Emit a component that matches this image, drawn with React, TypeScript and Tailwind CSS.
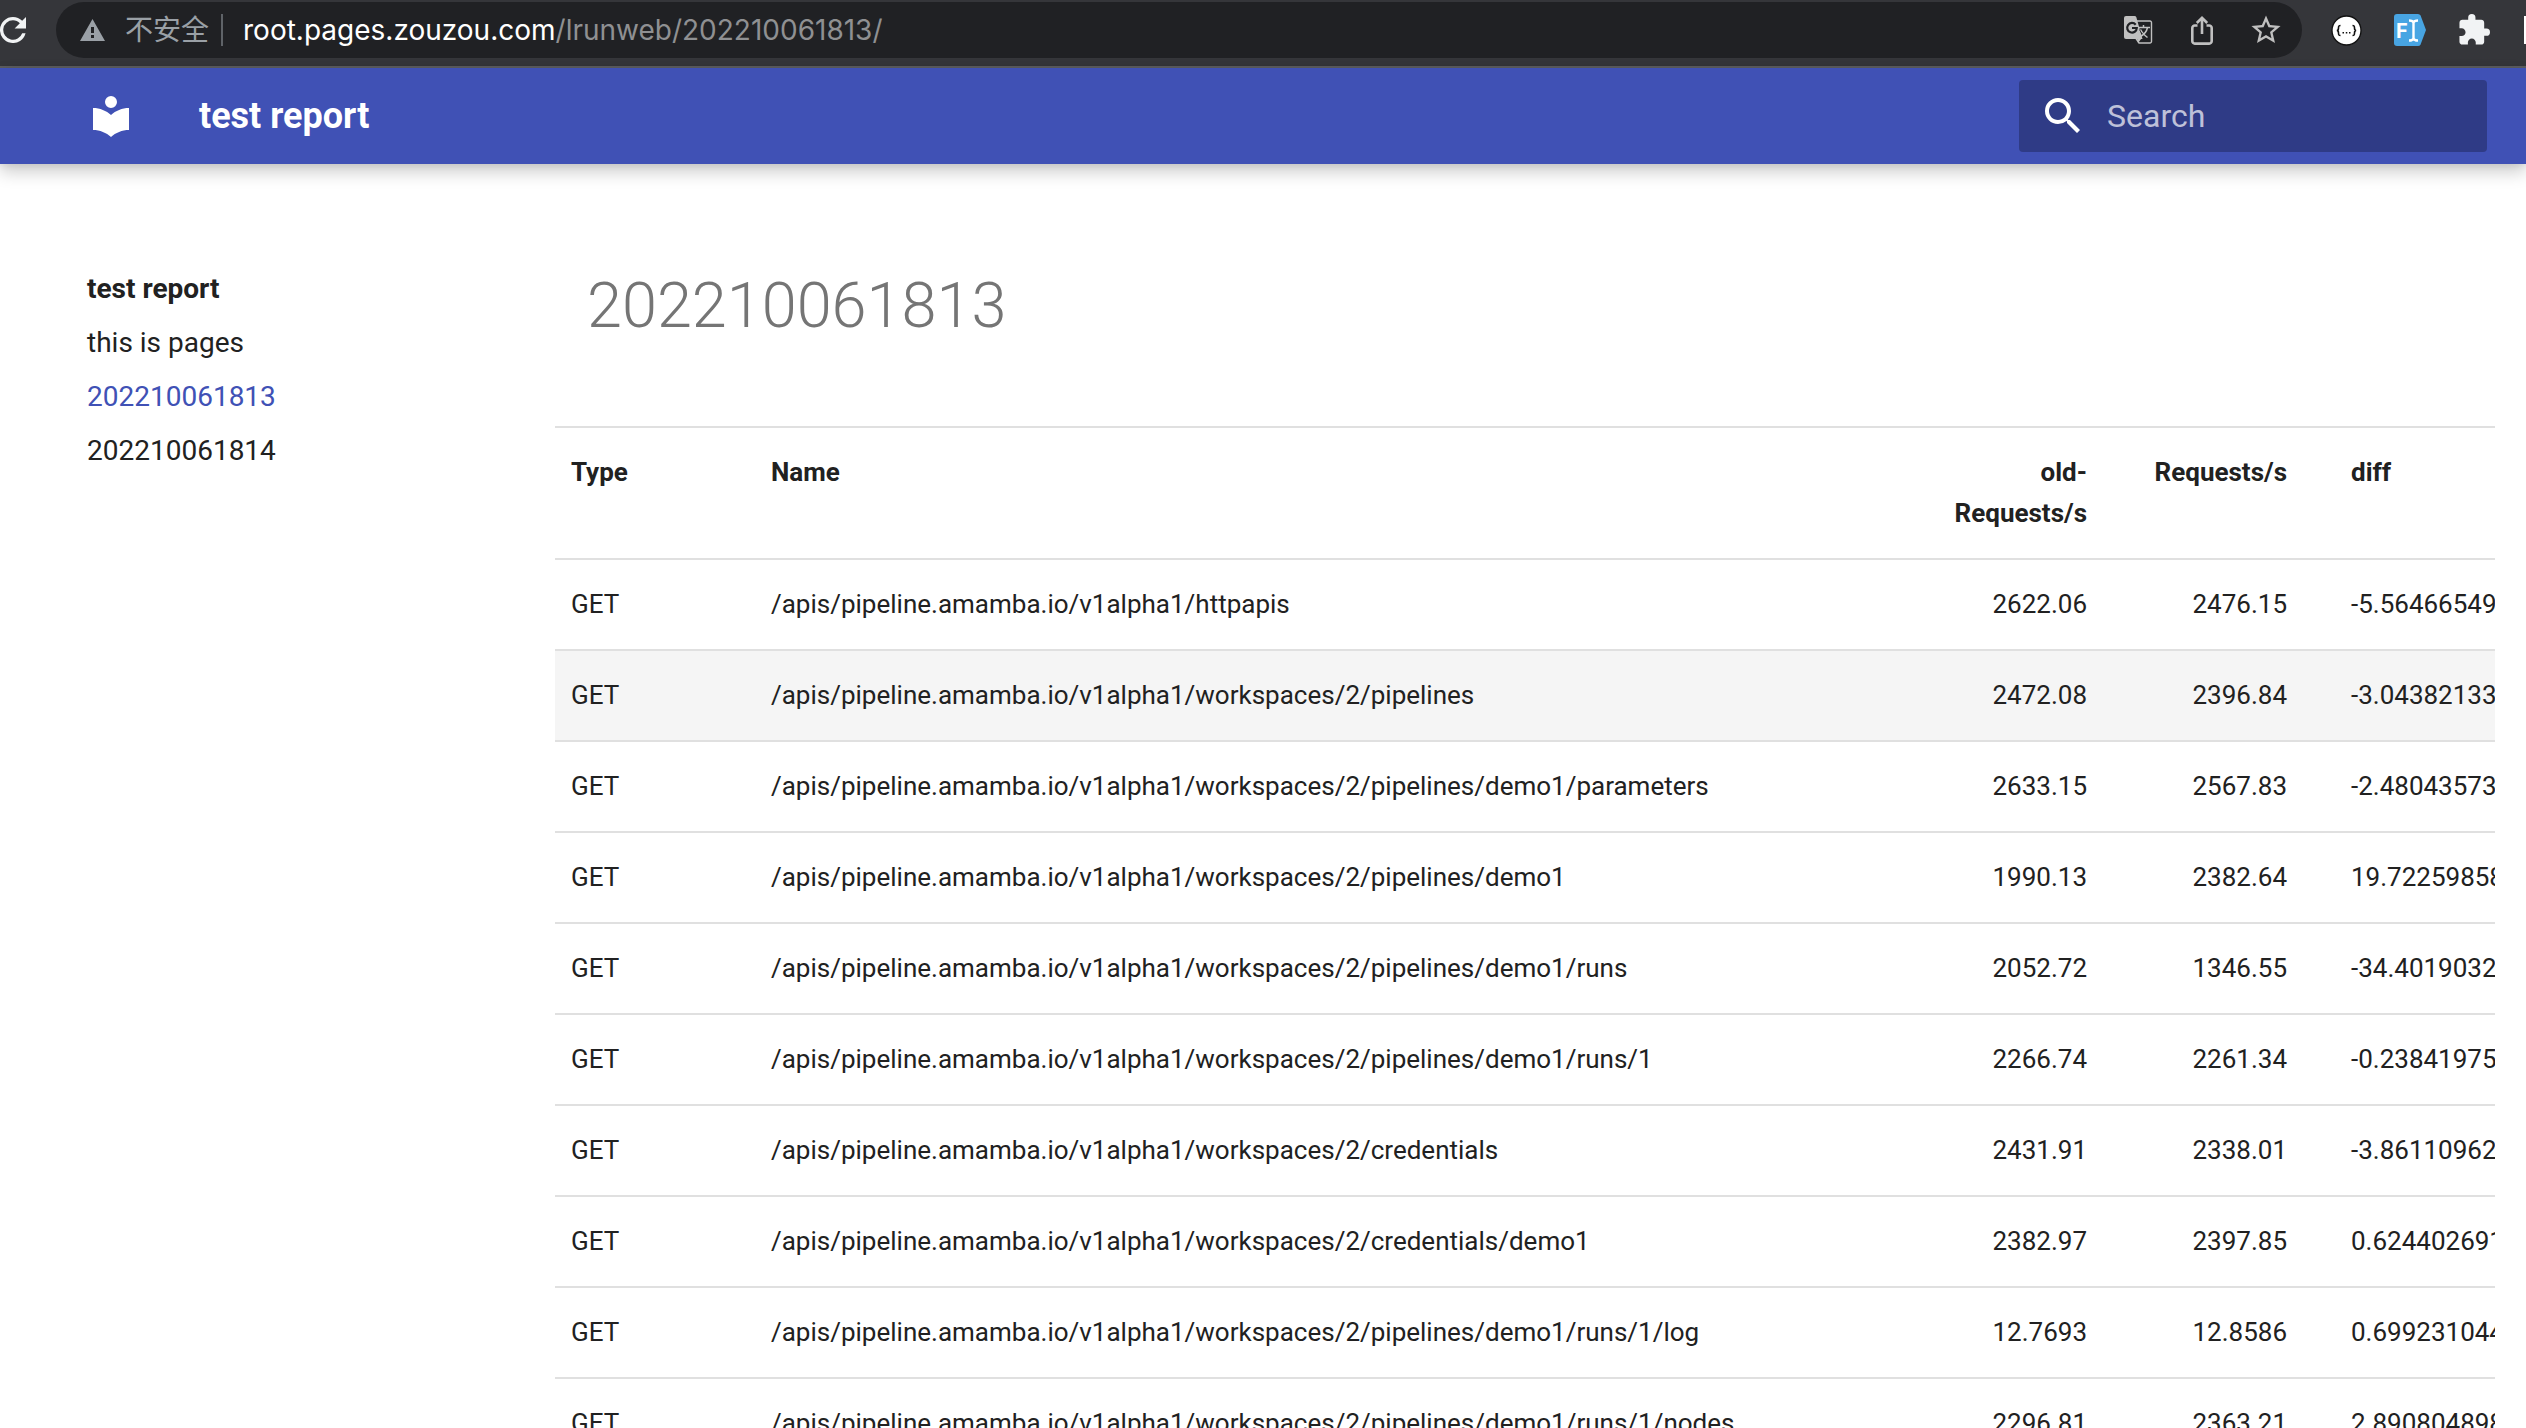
import { useState } from "react"

const rows = [
  ["GET", "/apis/pipeline.amamba.io/v1alpha1/httpapis", "2622.06", "2476.15", "-5.56466549"],
  ["GET", "/apis/pipeline.amamba.io/v1alpha1/workspaces/2/pipelines", "2472.08", "2396.84", "-3.04382133"],
  ["GET", "/apis/pipeline.amamba.io/v1alpha1/workspaces/2/pipelines/demo1/parameters", "2633.15", "2567.83", "-2.48043573"],
  ["GET", "/apis/pipeline.amamba.io/v1alpha1/workspaces/2/pipelines/demo1", "1990.13", "2382.64", "19.72259858"],
  ["GET", "/apis/pipeline.amamba.io/v1alpha1/workspaces/2/pipelines/demo1/runs", "2052.72", "1346.55", "-34.4019032"],
  ["GET", "/apis/pipeline.amamba.io/v1alpha1/workspaces/2/pipelines/demo1/runs/1", "2266.74", "2261.34", "-0.23841975"],
  ["GET", "/apis/pipeline.amamba.io/v1alpha1/workspaces/2/credentials", "2431.91", "2338.01", "-3.86110962"],
  ["GET", "/apis/pipeline.amamba.io/v1alpha1/workspaces/2/credentials/demo1", "2382.97", "2397.85", "0.624402691"],
  ["GET", "/apis/pipeline.amamba.io/v1alpha1/workspaces/2/pipelines/demo1/runs/1/log", "12.7693", "12.8586", "0.699231044"],
  ["GET", "/apis/pipeline.amamba.io/v1alpha1/workspaces/2/pipelines/demo1/runs/1/nodes", "2296.81", "2363.21", "2.890804898"],
]

const navItems = ["this is pages", "202210061813", "202210061814"]

function BrowserBar() {
  return (
    <div className="flex h-[68px] items-start overflow-hidden border-b-2 border-[#5e5f61] bg-[#35363a] pt-[2px] font-['Inter','Noto_Sans_CJK_SC',sans-serif]">
      <button aria-label="Reload" className="mt-[15px] mr-[30px] shrink-0">
        <svg viewBox="4 4 16 16" className="h-[26px] w-[26px] fill-[#f1f3f4]">
          <path d="M17.65 6.35A7.958 7.958 0 0 0 12 4a8 8 0 1 0 7.73 10h-2.08A6 6 0 1 1 12 6c1.66 0 3.14.69 4.22 1.78L13 11h7V4l-2.35 2.35z" />
        </svg>
      </button>

      {/* Address field */}
      <div className="flex h-14 min-w-0 flex-1 items-center rounded-full bg-[#202124] pr-5 pl-6">
        <svg viewBox="0 0 25 22" className="h-[22px] w-[25px] fill-[#9aa0a6]">
          <path fillRule="evenodd" d="M12.5 0 25 22H0zM11 8v6h3V8zm0 8v3h3v-3z" />
        </svg>
        <span className="ml-5 text-[28px] text-[#9aa0a6]">不安全</span>
        <span className="ml-3 h-8 w-[2px] bg-[#5f6368]" />
        <span className="ml-5 flex-1 text-[28px] text-[#8f9092]">
          <span className="text-white">root.pages.zouzou.com</span>/lrunweb/202210061813/
        </span>
        <div className="flex items-center gap-8">
          <button aria-label="Translate">
            <svg viewBox="0 0 32 32" className="h-8 w-8">
              <path d="M14 7h14a1.5 1.5 0 0 1 1.500 1.500v19A1.500 1.500 0 0 1 28 29H17l-4-6" fill="none" stroke="#c0c0c0" strokeWidth="1.400" />
              <path d="M19.500 24.500 16 29l-1-5z" fill="#c0c0c0" />
              <path d="M4 2h8.500a2 2 0 0 1 1.900 1.400L20.500 25H4a2 2 0 0 1-2-2V4a2 2 0 0 1 2-2z" fill="#c0c0c0" />
              <path d="M15.800 13.500H28M21.500 11v2.500M25.500 13.500c-.8 4-4 7.500-7.500 9M18.500 15.500c1.500 3.500 4.500 6 7 8" fill="none" stroke="#c0c0c0" strokeWidth="1.500" />
              <path d="M17.400 15.500c1 2 2 3.500 3 4.500" fill="none" stroke="#202124" strokeWidth="0.800" />
              <path d="M13.700 10.700A4.800 4.800 0 1 0 14.800 14H10" fill="none" stroke="#202124" strokeWidth="2.200" />
            </svg>
          </button>
          <button aria-label="Share">
            <svg viewBox="0 0 32 32" className="h-8 w-8" fill="none" stroke="#c0c0c0" strokeWidth="2.600">
              <path d="M11.500 11.500H9A2.500 2.500 0 0 0 6.300 14v13A2.500 2.500 0 0 0 9 29.600h14a2.500 2.500 0 0 0 2.700-2.600V14a2.500 2.500 0 0 0-2.700-2.500h-2.500M16 20V4M10.800 9 16 3.800 21.200 9" />
            </svg>
          </button>
          <button aria-label="Bookmark">
            <svg viewBox="1 1 22 22" className="h-8 w-8 fill-[#c0c0c0]">
              <path d="m22 9.240-7.190-.62L12 2 9.190 8.630 2 9.240l5.460 4.730L5.820 21 12 17.270 18.180 21l-1.630-7.030L22 9.240zM12 15.400l-3.760 2.270 1-4.280-3.320-2.880 4.380-.38L12 6.100l1.710 4.040 4.380.38-3.320 2.880 1 4.280L12 15.400z" />
            </svg>
          </button>
        </div>
      </div>

      {/* Extensions */}
      <div className="ml-7 flex h-14 shrink-0 items-center gap-8">
        <button aria-label="JSON viewer">
          <svg viewBox="0 0 32 32" className="h-8 w-8">
            <circle cx="16.500" cy="16.500" r="14.500" fill="#fff" stroke="#111" strokeWidth="1.300" />
            <g fill="none" stroke="#111" strokeWidth="1.600">
              <path d="M10.500 11.500c-2 0-2 .8-2 2.500 0 1.600 0 2.500-1.700 2.500 1.700 0 1.700.9 1.700 2.500 0 1.700 0 2.500 2 2.500M22.500 11.500c2 0 2 .8 2 2.500 0 1.600 0 2.500 1.700 2.500-1.700 0-1.700.9-1.700 2.500 0 1.700 0 2.500-2 2.500" />
            </g>
            <path d="M12.500 18h1.500v1.500h-1.500zM15.800 18h1.500v1.500h-1.500zM19 18h1.500v1.500H19z" fill="#111" />
          </svg>
        </button>
        <button aria-label="Form filler">
          <svg viewBox="0 0 32 32" className="h-8 w-8">
            <path d="M3 0h21a3 3 0 0 1 2.600 1.600L32 16l-5.400 14.400A3 3 0 0 1 24 32H3a3 3 0 0 1-3-3V3a3 3 0 0 1 3-3z" fill="#48a5e3" />
            <text x="2" y="23.500" fontSize="20" fontWeight="700" fill="#fff">F</text>
            <path d="M15 6.500c2.500 0 4 .5 4.500 2 .5-1.500 2-2 4.500-2M19.500 8v17M15 26.500c2.500 0 4-.5 4.500-2 .5 1.500 2 2 4.500 2" fill="none" stroke="#fff" strokeWidth="2.400" />
          </svg>
        </button>
        <button aria-label="Extensions">
          <svg viewBox="1 1 22 22" className="h-8 w-8 fill-[#f1f3f4]">
            <path d="M20.500 11H19V7c0-1.100-.9-2-2-2h-4V3.500a2.500 2.500 0 0 0-5 0V5H4c-1.100 0-1.990.9-1.990 2v3.800H3.500c1.490 0 2.700 1.210 2.700 2.700s-1.210 2.700-2.700 2.700H2V20c0 1.100.9 2 2 2h3.800v-1.500c0-1.490 1.210-2.700 2.700-2.700 1.490 0 2.700 1.210 2.700 2.700V22H17c1.100 0 2-.9 2-2v-4h1.500a2.500 2.500 0 0 0 0-5z" />
          </svg>
        </button>
        <span className="h-7 w-1 border-r-2 border-white" />
      </div>
    </div>
  )
}

export default function App() {
  const [query, setQuery] = useState("")

  return (
    <div className="h-screen overflow-hidden bg-white font-['Roboto',sans-serif] text-[#212121]">
      <BrowserBar />
      <header className="relative flex h-24 items-center bg-[#4051b5] pr-[39px] pl-[87px] text-white shadow-[0_0_8px_#0000001a,0_8px_16px_#00000033]">
        <a href="#" aria-label="test report">
          <svg viewBox="0 0 24 24" className="h-12 w-12 fill-white">
            <path d="M12 8a3 3 0 0 0 3-3 3 3 0 0 0-3-3 3 3 0 0 0-3 3 3 3 0 0 0 3 3m0 3.540C9.640 9.350 6.500 8 3 8v11c3.500 0 6.640 1.350 9 3.540 2.360-2.190 5.500-3.540 9-3.540V8c-3.500 0-6.640 1.350-9 3.540z" />
          </svg>
        </a>
        <span className="ml-16 flex-1 text-4xl font-bold">test report</span>
        <label className="flex h-[72px] w-[468px] items-center rounded bg-[#2f3b86] pl-5">
          <svg viewBox="0 0 24 24" className="h-12 w-12 shrink-0 fill-white">
            <path d="M9.500 3A6.500 6.500 0 0 1 16 9.500c0 1.610-.59 3.090-1.560 4.230l.27.27h.79l5 5-1.500 1.500-5-5v-.79l-.27-.27A6.516 6.516 0 0 1 9.500 16 6.500 6.500 0 0 1 3 9.500 6.500 6.500 0 0 1 9.500 3m0 2C7 5 5 7 5 9.500S7 14 9.500 14 14 12 14 9.500 12 5 9.500 5z" />
          </svg>
          <input
            type="text"
            aria-label="Search"
            placeholder="Search"
            value={query}
            onChange={(e) => setQuery(e.target.value)}
            className="ml-5 w-full min-w-0 bg-transparent text-[32px] outline-none placeholder:text-white/70"
          />
        </label>
      </header>

      <div className="flex pr-[31px]">
        <nav className="w-[555px] shrink-0 pt-[98px] pl-[87px] text-[28px] leading-[54px]">
          <a href="#" className="font-bold">test report</a>
          <ul>
            {navItems.map((item) => (
              <li key={item}>
                <a href={`#${item}`} className={item === "202210061813" ? "text-[#4051b5]" : ""}>{item}</a>
              </li>
            ))}
          </ul>
        </nav>

        <main className="min-w-0 flex-1 pt-[98px]">
          <h1 className="mb-[77px] pl-8 text-[63px] leading-[87px] font-light text-[#757575]">202210061813</h1>
          <table className="w-full table-fixed text-[26px] leading-[41px]">
            <thead>
              <tr className="border-y-2 border-[#e0e0e0] text-left align-top">
                <th className="w-[184px] py-6 pr-8 pl-4">Type</th>
                <th className="px-8 py-6">Name</th>
                <th className="w-[200px] px-8 py-6 text-right">old-Requests/s</th>
                <th className="w-[200px] px-8 py-6 text-right">Requests/s</th>
                <th className="w-[176px] py-6 pl-8">diff</th>
              </tr>
            </thead>
            <tbody>
              {rows.map(([type, name, oldRps, rps, diff], i) => (
                <tr key={name} className={i === 1 ? "border-b-2 border-[#e0e0e0] bg-[#f5f5f5]" : "border-b-2 border-[#e0e0e0]"}>
                  <td className="py-6 pr-8 pl-4">{type}</td>
                  <td className="px-8 py-6">{name}</td>
                  <td className="px-8 py-6 text-right">{oldRps}</td>
                  <td className="px-8 py-6 text-right">{rps}</td>
                  <td className="overflow-hidden py-6 pl-8 whitespace-nowrap">{diff}</td>
                </tr>
              ))}
            </tbody>
          </table>
        </main>
      </div>
    </div>
  )
}
